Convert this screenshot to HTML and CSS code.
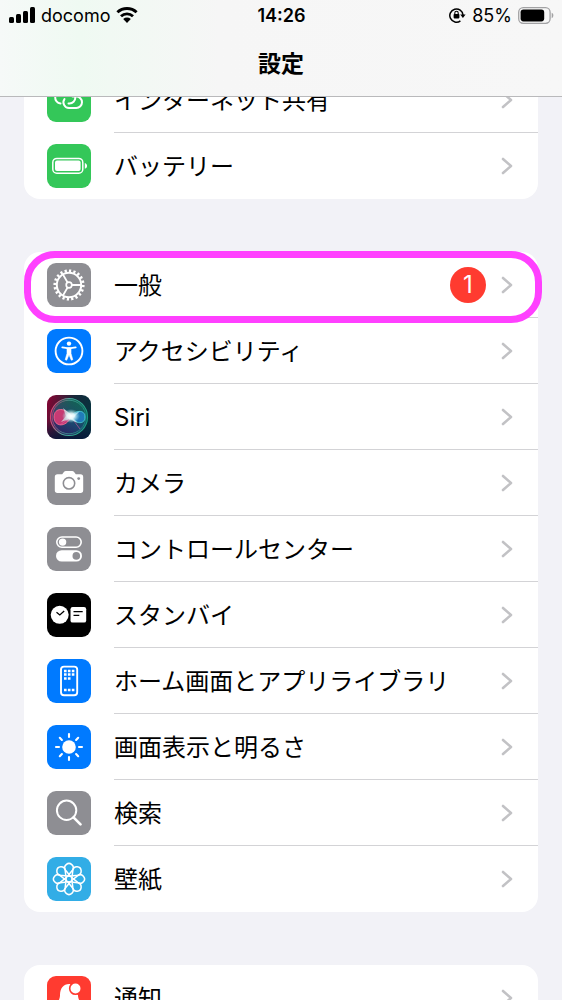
FILE: index.html
```html
<!DOCTYPE html>
<html lang="ja">
  <head>
    <meta charset="UTF-8" />
    <meta name="viewport" content="width=device-width, initial-scale=1.0" />
    <title>設定</title>
    <link rel="stylesheet" href="styles.css">
  </head>
  <body>
    <svg class="defs" aria-hidden="true">
      <symbol id="chevron" viewBox="0 0 12 18">
        <path d="M2 2l8 7-8 7" fill="none" stroke="#c2c2c5" stroke-width="2.6" stroke-linecap="round" stroke-linejoin="round"/>
      </symbol>
    </svg>

    <header class="topbar">
      <div class="status">
        <div class="status-left">
          <svg width="26" height="16" viewBox="0 0 26 16">
            <rect x="0" y="10" width="5" height="6" rx="1.5"/>
            <rect x="7" y="7" width="5" height="9" rx="1.5"/>
            <rect x="14" y="4" width="5" height="12" rx="1.5"/>
            <rect x="21" y="0" width="5" height="16" rx="1.5"/>
          </svg>
          <span>docomo</span>
          <svg class="wifi" width="22" height="16" viewBox="0 0 22 16">
            <path d="M1.4 5.3a14 14 0 0 1 19.2 0M5 9.2a8.8 8.8 0 0 1 12 0" fill="none" stroke="#000" stroke-width="2.9"/>
            <path d="M7.2 12.1a5.6 5.6 0 0 1 7.6 0L11 16z"/>
          </svg>
        </div>
        <time class="clock">14:26</time>
        <div class="status-right">
          <svg width="17" height="16" viewBox="0 0 17 16">
            <path d="M11.4 13.8A6.6 6.6 0 1 1 14 8" fill="none" stroke="#000" stroke-width="1.5"/>
            <path d="M11.2 7.4h5.4L13.9 11z"/>
            <rect x="4.6" y="7" width="5.8" height="4.4" rx=".8"/>
            <path d="M5.8 7.4V6a1.7 1.7 0 0 1 3.4 0v1.4" fill="none" stroke="#000" stroke-width="1.1"/>
          </svg>
          <span>85%</span>
          <svg width="36" height="17" viewBox="0 0 36 17">
            <rect x=".7" y=".7" width="31.4" height="15.6" rx="4.5" fill="none" stroke="#a2a2a4" stroke-width="1.3"/>
            <rect x="2.6" y="2.6" width="23.6" height="11.8" rx="2.8"/>
            <path d="M33.7 5.8c2.2.9 2.2 4.5 0 5.4z" fill="#a2a2a4"/>
          </svg>
        </div>
      </div>
      <h1 class="title">設定</h1>
    </header>

    <main class="settings">
      <ul class="group">
        <li>
          <a class="row" href="#tethering">
            <svg class="icon green" viewBox="0 0 44 44">
              <g fill="none" stroke="#fff" stroke-width="2" stroke-linecap="round">
                <path d="M13.500 25.500a5.800 5.800 0 0 1 1-11.600h8a5.800 5.800 0 0 1 0 11.600h-1"/>
                <path d="M25.500 18.600h3.800a5.700 5.700 0 0 1 0 11.400H22a5.700 5.700 0 0 1-4.500-9"/>
              </g>
            </svg>
            <span class="content"><span class="label">インターネット共有</span><svg class="chevron"><use href="#chevron"/></svg></span>
          </a>
        </li>
        <li>
          <a class="row" href="#battery">
            <svg class="icon green" viewBox="0 0 44 44">
              <rect x="5.800" y="14.400" width="30" height="14.800" rx="4" fill="none" stroke="#fff" stroke-width="1.500"/>
              <rect x="8" y="16.600" width="25.600" height="10.400" rx="2" fill="#fff"/>
              <path d="M37.800 19c3 .8 3 5 0 5.800z" fill="#fff"/>
            </svg>
            <span class="content"><span class="label">バッテリー</span><svg class="chevron"><use href="#chevron"/></svg></span>
          </a>
        </li>
      </ul>

      <ul class="group">
        <li class="highlighted">
          <a class="row" href="#general">
            <svg class="icon gray" viewBox="0 0 44 44">
              <g fill="none" stroke="#fff">
                <circle cx="22" cy="22" r="12.200" stroke-width="2"/>
                <circle cx="22" cy="22" r="14.200" stroke-width="2.800" pathLength="40" stroke-dasharray="1 1"/>
                <circle cx="22" cy="22" r="2.800" stroke-width="1.700"/>
                <path d="M25 22h9M20.500 19.400L15.900 11.400M20.500 24.600L15.900 32.600" stroke-width="1.900"/>
              </g>
            </svg>
            <span class="content"><span class="label">一般</span><span class="badge">1</span><svg class="chevron"><use href="#chevron"/></svg></span>
          </a>
        </li>
        <li>
          <a class="row" href="#accessibility">
            <svg class="icon blue" viewBox="0 0 44 44">
              <circle cx="22" cy="22" r="13.400" fill="none" stroke="#fff" stroke-width="1.900"/>
              <circle cx="22" cy="14.600" r="2.200" fill="#fff"/>
              <path d="M15.300 18.300l5 .9h3.400l5-.9M22 19v6" fill="none" stroke="#fff" stroke-width="1.800" stroke-linecap="round"/>
              <path d="M20 19h4v5.500l1.800 6.200-1.500.5L22 25.800l-2.300 5.400-1.500-.5 1.800-6.200z" fill="#fff" stroke="#fff" stroke-width=".6" stroke-linejoin="round"/>
            </svg>
            <span class="content"><span class="label">アクセシビリティ</span><svg class="chevron"><use href="#chevron"/></svg></span>
          </a>
        </li>
        <li>
          <a class="row" href="#siri">
            <svg class="icon" viewBox="0 0 44 44">
              <defs>
                <linearGradient id="siri-bg" x1="0" y1=".3" x2="1" y2=".6">
                  <stop offset="0" stop-color="#7d0733"/>
                  <stop offset=".5" stop-color="#17283a"/>
                  <stop offset="1" stop-color="#05343f"/>
                </linearGradient>
                <linearGradient id="siri-shade" x1="0" y1="0" x2="0" y2="1">
                  <stop offset=".6" stop-color="#08133a" stop-opacity="0"/>
                  <stop offset="1" stop-color="#08133a" stop-opacity=".8"/>
                </linearGradient>
                <linearGradient id="siri-ring" x1="0" y1=".3" x2="1" y2=".5">
                  <stop offset="0" stop-color="#e8386f"/>
                  <stop offset=".45" stop-color="#4aa89d"/>
                  <stop offset="1" stop-color="#189c80"/>
                </linearGradient>
                <linearGradient id="siri-orb" x1=".2" y1="1" x2=".7" y2="0">
                  <stop offset="0" stop-color="#3d1d73"/>
                  <stop offset=".4" stop-color="#24548a"/>
                  <stop offset="1" stop-color="#128360"/>
                </linearGradient>
                <radialGradient id="siri-glow">
                  <stop offset="0" stop-color="#fff"/>
                  <stop offset=".4" stop-color="#f0ffff" stop-opacity=".85"/>
                  <stop offset="1" stop-color="#9ee" stop-opacity="0"/>
                </radialGradient>
              </defs>
              <rect width="44" height="44" fill="url(#siri-bg)"/>
              <rect width="44" height="44" fill="url(#siri-shade)"/>
              <circle cx="22" cy="22" r="18.500" fill="url(#siri-orb)" fill-opacity=".65" stroke="url(#siri-ring)" stroke-width="1.200"/>
              <circle cx="22" cy="22" r="16.800" fill="none" stroke="url(#siri-ring)" stroke-width=".7"/>
              <path d="M24 22c-5-10-17-10-17 0s12 11 17 0z" fill="#e23975" fill-opacity=".85" stroke="#ff7094" stroke-width=".8"/>
              <path d="M23 22c5-7 15-8 15 0s-9 7-15 0z" fill="#2588d5" fill-opacity=".75" stroke="#50d9dd" stroke-width=".8"/>
              <path d="M13 30l11-8 9 12" fill="none" stroke="#db5ca1" stroke-width="1" opacity=".6"/>
              <path d="M16 13l9 7 8-4-7 7 5 5-9-4-8 3 5-6z" fill="#dffffb" fill-opacity=".6"/>
              <ellipse cx="24" cy="21" rx="9" ry="7" fill="url(#siri-glow)"/>
            </svg>
            <span class="content"><span class="label">Siri</span><svg class="chevron"><use href="#chevron"/></svg></span>
          </a>
        </li>
        <li>
          <a class="row" href="#camera">
            <svg class="icon gray" viewBox="0 0 44 44">
              <path d="M10.500 13.200h4.700l1.900-2.400q.7-.8 1.700-.8h6.400q1 0 1.700.8l1.900 2.400h4.700q2.700 0 2.700 2.700v13.400q0 2.700-2.700 2.700h-23q-2.700 0-2.700-2.700V15.900q0-2.700 2.700-2.700z" fill="#fff"/>
              <circle cx="22" cy="22.300" r="5.700" fill="none" stroke="#8e8e93" stroke-width="1.600"/>
              <circle cx="31.700" cy="17.600" r="1.400" fill="#8e8e93"/>
            </svg>
            <span class="content"><span class="label">カメラ</span><svg class="chevron"><use href="#chevron"/></svg></span>
          </a>
        </li>
        <li>
          <a class="row" href="#control-center">
            <svg class="icon gray" viewBox="0 0 44 44">
              <rect x="9.800" y="10" width="24.400" height="10.200" rx="5.100" fill="none" stroke="#fff" stroke-width="1.600"/>
              <circle cx="15.600" cy="15.100" r="3.700" fill="#fff"/>
              <rect x="9" y="23.200" width="26" height="11.400" rx="5.700" fill="#fff"/>
              <circle cx="29.300" cy="28.900" r="3.800" fill="#8e8e93"/>
            </svg>
            <span class="content"><span class="label">コントロールセンター</span><svg class="chevron"><use href="#chevron"/></svg></span>
          </a>
        </li>
        <li>
          <a class="row" href="#standby">
            <svg class="icon black" viewBox="0 0 44 44">
              <circle cx="12.700" cy="21.800" r="9" fill="#fff"/>
              <rect x="23.500" y="14" width="15.700" height="15.600" rx="2.200" fill="#fff"/>
              <path d="M9.500 19.200l3.300 2.800 4.400-4M26.500 18.600h9.200M26.500 22.400h5.800" fill="none" stroke="#000" stroke-width="1.300"/>
            </svg>
            <span class="content"><span class="label">スタンバイ</span><svg class="chevron"><use href="#chevron"/></svg></span>
          </a>
        </li>
        <li>
          <a class="row" href="#home-screen">
            <svg class="icon blue" viewBox="0 0 44 44">
              <rect x="14" y="7.600" width="16.200" height="28.600" rx="3" fill="none" stroke="#fff" stroke-width="1.900"/>
              <path d="M17 12h10.400M17 15.600h10.400M17 19.400h6.600M17 31h10.400" fill="none" stroke="#fff" stroke-width="2.500" stroke-dasharray="2.600 1.300"/>
            </svg>
            <span class="content"><span class="label">ホーム画面とアプリライブラリ</span><svg class="chevron"><use href="#chevron"/></svg></span>
          </a>
        </li>
        <li>
          <a class="row" href="#display">
            <svg class="icon blue" viewBox="0 0 44 44">
              <circle cx="22" cy="22" r="6.800" fill="#fff"/>
              <path d="M22 9v3M22 32v3M9 22h3M32 22h3M12.800 12.800l2.100 2.100M29.100 29.100l2.100 2.100M12.800 31.200l2.100-2.100M29.100 14.900l2.100-2.100" stroke="#fff" stroke-width="2.100" stroke-linecap="round"/>
            </svg>
            <span class="content"><span class="label">画面表示と明るさ</span><svg class="chevron"><use href="#chevron"/></svg></span>
          </a>
        </li>
        <li>
          <a class="row" href="#search">
            <svg class="icon gray" viewBox="0 0 44 44">
              <circle cx="19.600" cy="19.300" r="9.700" fill="none" stroke="#fff" stroke-width="2"/>
              <path d="M26.500 26.400l7 7" stroke="#fff" stroke-width="2.700" stroke-linecap="round"/>
            </svg>
            <span class="content"><span class="label">検索</span><svg class="chevron"><use href="#chevron"/></svg></span>
          </a>
        </li>
        <li>
          <a class="row" href="#wallpaper">
            <svg class="icon cyan" viewBox="0 0 44 44">
              <defs>
                <path id="petal" d="M24 20L18.600 13.200a4.200 4.200 0 1 1 6.800 0L20 20"/>
              </defs>
              <g fill="none" stroke="#fff" stroke-width="1.500">
                <use href="#petal"/>
                <use href="#petal" transform="rotate(45 22 22)"/>
                <use href="#petal" transform="rotate(90 22 22)"/>
                <use href="#petal" transform="rotate(135 22 22)"/>
                <use href="#petal" transform="rotate(180 22 22)"/>
                <use href="#petal" transform="rotate(225 22 22)"/>
                <use href="#petal" transform="rotate(270 22 22)"/>
                <use href="#petal" transform="rotate(315 22 22)"/>
              </g>
              <circle cx="22" cy="22" r="1.700" fill="#32ade6"/>
            </svg>
            <span class="content"><span class="label">壁紙</span><svg class="chevron"><use href="#chevron"/></svg></span>
          </a>
        </li>
      </ul>

      <ul class="group">
        <li>
          <a class="row" href="#notifications">
            <svg class="icon red" viewBox="0 0 44 44">
              <path d="M23 8c-6-.5-10 4-10 11 0 5-3 7-3 10h24c0-3-3-5-3-10z" fill="#fff"/>
              <path d="M18 33h8a4 4 0 0 1-8 0z" fill="#fff"/>
              <circle cx="28.500" cy="12.500" r="5.800" fill="#fff" stroke="#ff3b30" stroke-width="1.600"/>
            </svg>
            <span class="content"><span class="label">通知</span><svg class="chevron"><use href="#chevron"/></svg></span>
          </a>
        </li>
      </ul>
    </main>
  </body>
</html>
```

FILE: styles.css
```css
* {
  box-sizing: border-box;
}

body {
  margin: 0;
  height: 100vh;
  overflow: hidden;
  background: #f2f2f7;
  color: #000;
  font-family: Inter, "Noto Sans CJK JP", sans-serif;
}

.defs {
  position: absolute;
  width: 0;
  height: 0;
}

.topbar {
  position: fixed;
  top: 0;
  left: 0;
  right: 0;
  z-index: 1;
  height: 97px;
  border-bottom: 1px solid #b9b9bb;
  background: linear-gradient(90deg, #f6f9f8 0, #effaf2 80px, #f1f9f3 110px, #f6f6f6 220px, #f7f7f7 100%);
}

.status {
  display: grid;
  grid-template-columns: 1fr auto 1fr;
  align-items: center;
  height: 30px;
  padding: 0 8px 0 9px;
  font-size: 18px;
}

.status-left,
.status-right {
  display: flex;
  align-items: center;
  gap: 6px;
}

.status-right {
  justify-content: flex-end;
}

.clock {
  font-weight: 600;
}

.title {
  margin: 0;
  font-size: 23px;
  font-weight: 700;
  line-height: 68px;
  text-align: center;
}

.settings {
  padding: 67px 24px 0;
}

.group {
  list-style: none;
  margin: 0 0 53px;
  padding: 0;
  border-radius: 16px;
  background: #fff;
}

.row {
  display: flex;
  align-items: center;
  gap: 23px;
  padding-left: 23px;
  color: inherit;
  text-decoration: none;
}

.icon {
  flex: none;
  width: 44px;
  height: 44px;
  border-radius: 9px;
}

.green { background: #34c759; }
.gray { background: #8e8e93; }
.blue { background: #007aff; }
.black { background: #000; }
.cyan { background: #32ade6; }
.red { background: #ff3b30; }

.content {
  flex: 1;
  display: flex;
  align-items: center;
  height: 66px;
  padding-right: 25px;
  border-bottom: 1px solid #d3d3d6;
}
li:last-child .content {
  border-bottom-color: transparent;
}

.label {
  flex: 1;
  padding-top: 2px;
  font-size: 24px;
  line-height: 32px;
}

.badge {
  width: 36px;
  height: 36px;
  margin-right: 15px;
  border-radius: 50%;
  background: #ff3b30;
  color: #fff;
  font-size: 24px;
  line-height: 36px;
  text-align: center;
}

.chevron {
  width: 12px;
  height: 18px;
}

/* marker drawn around a row */
.highlighted {
  position: relative;
}
.highlighted::after {
  content: "";
  position: absolute;
  inset: -1px -4px -5px 0;
  border: 7px solid #ff40ff;
  border-radius: 31px;
  pointer-events: none;
}
```
